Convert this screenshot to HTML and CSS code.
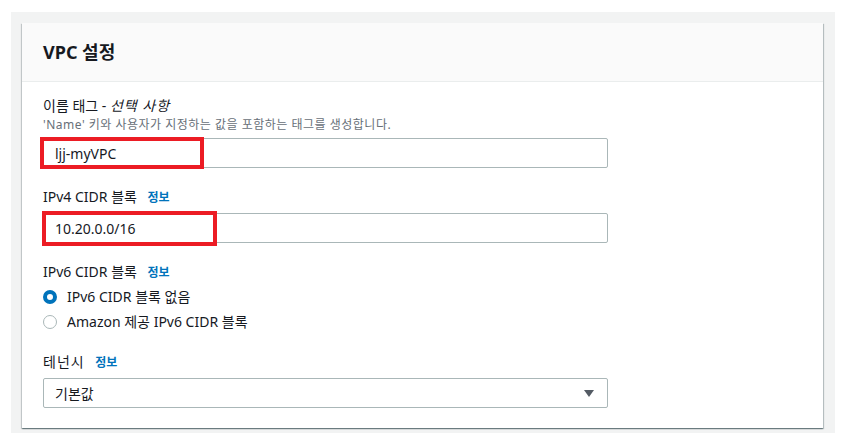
FILE: index.html
```html
<!DOCTYPE html>
<html lang="ko">
<head>
<meta charset="utf-8">
<title>VPC 설정</title>
<link rel="stylesheet" href="styles.css">
</head>
<body>
<div class="page">
  <section class="card">
    <header class="card-header">
      <h2 class="card-title">VPC 설정</h2>
    </header>
    <div class="card-body">
      <div class="field">
        <div class="label">이름 태그 - <em>선택 사항</em></div>
        <div class="desc">'Name' 키와 사용자가 지정하는 값을 포함하는 태그를 생성합니다.</div>
        <div class="control">
          <div class="input">ljj-myVPC</div>
          <span class="mark mark-name"></span>
        </div>
      </div>
      <div class="field">
        <div class="label">IPv4 CIDR 블록 <a class="info">정보</a></div>
        <div class="control">
          <div class="input">10.20.0.0/16</div>
          <span class="mark mark-cidr"></span>
        </div>
      </div>
      <div class="field">
        <div class="label">IPv6 CIDR 블록 <a class="info">정보</a></div>
        <div class="radios">
          <div class="radio-row"><span class="radio checked"></span><span>IPv6 CIDR 블록 없음</span></div>
          <div class="radio-row"><span class="radio"></span><span>Amazon 제공 IPv6 CIDR 블록</span></div>
        </div>
      </div>
      <div class="field last">
        <div class="label"><span class="wide">테넌시</span> <a class="info">정보</a></div>
        <div class="control">
          <div class="input select"><span>기본값</span><span class="caret"></span></div>
        </div>
      </div>
    </div>
  </section>
</div>
</body>
</html>
```
FILE: styles.css
```css
* { box-sizing: border-box; }
html, body { margin: 0; padding: 0; background: #ffffff; }
body {
  font-family: "Noto Sans", "Noto Sans CJK KR", sans-serif;
  color: #16191f;
  font-size: 14px;
}
.page {
  margin: 12px 6px 0 11px;
  width: 824px;
  height: 421px;
  background: #f2f3f3;
  padding: 11px 12px 0 11px;
}
.card {
  background: #ffffff;
  height: 405px;
  box-shadow: 0 1px 1px 0 rgba(0, 28, 36, 0.35), 1px 1px 1px 0 rgba(0, 28, 36, 0.2), -1px 1px 1px 0 rgba(0, 28, 36, 0.15);
}
.card-header {
  height: 59px;
  background: #fafafa;
  border-bottom: 1px solid #eaeded;
  display: flex;
  align-items: center;
  padding-left: 21px;
}
.card-title {
  margin: 0;
  font-size: 18px;
  font-weight: 700;
  line-height: 24px;
  height: 24px;
}
.card-body {
  padding: 13px 21px 0 21px;
}
.field { margin-bottom: 18px; }
.field.last { margin-bottom: 0; }
.label {
  line-height: 22px;
  height: 22px;
  font-size: 14px;
}
.label em { font-style: italic; letter-spacing: 1px; }
.wide { letter-spacing: 1px; }
.info {
  color: #0073bb;
  font-weight: 700;
  font-size: 12px;
  margin-left: 7px;
}
.desc {
  font-size: 12px;
  line-height: 16px;
  height: 16px;
  color: #687078;
  letter-spacing: 0.5px;
}
.control {
  position: relative;
  margin-top: 5px;
  width: 565px;
}
.input {
  height: 30px;
  border: 1px solid #aab7b8;
  border-radius: 2px;
  padding: 0 11px;
  display: flex;
  align-items: center;
  font-size: 14px;
}
.select { justify-content: space-between; padding-right: 13px; }
.caret {
  width: 0;
  height: 0;
  border-left: 5px solid transparent;
  border-right: 5px solid transparent;
  border-top: 7px solid #545b64;
}
.mark {
  position: absolute;
  border: 4px solid #ec1c24;
}
.mark-name { left: -3px; top: -1px; width: 164px; height: 32px; }
.mark-cidr { left: -1px; top: -2px; width: 175px; height: 35px; }
.radios {
  display: flex;
  flex-direction: column;
  gap: 3px;
  margin-top: 3px;
}
.radio-row {
  display: flex;
  align-items: center;
  gap: 10px;
  line-height: 22px;
  height: 22px;
}
.radio {
  width: 14px;
  height: 14px;
  border-radius: 50%;
  border: 1px solid #aab7b8;
  background: #fff;
  flex: none;
}
.radio.checked {
  border: 4px solid #0073bb;
}
```
